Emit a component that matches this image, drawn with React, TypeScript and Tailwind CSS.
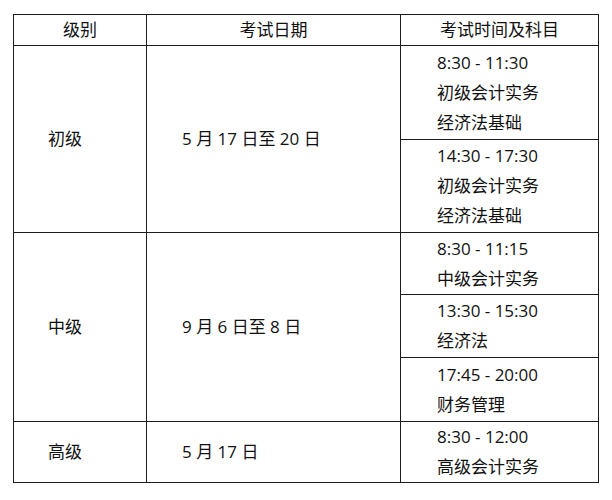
const font = { fontFamily: '"Open Sans", "Noto Sans CJK SC", "Noto Sans", sans-serif' };

type Slot = { time: string; subjects: string[]; h: string };
type Level = { name: string; date: string; slots: Slot[] };

const levels: Level[] = [
  {
    name: "初级",
    date: "5 月 17 日至 20 日",
    slots: [
      { time: "8:30 - 11:30", subjects: ["初级会计实务", "经济法基础"], h: "h-[94px]" },
      { time: "14:30 - 17:30", subjects: ["初级会计实务", "经济法基础"], h: "h-[93px]" },
    ],
  },
  {
    name: "中级",
    date: "9 月 6 日至 8 日",
    slots: [
      { time: "8:30 - 11:15", subjects: ["中级会计实务"], h: "h-[62px]" },
      { time: "13:30 - 15:30", subjects: ["经济法"], h: "h-[63px]" },
      { time: "17:45 - 20:00", subjects: ["财务管理"], h: "h-[64px]" },
    ],
  },
  {
    name: "高级",
    date: "5 月 17 日",
    slots: [{ time: "8:30 - 12:00", subjects: ["高级会计实务"], h: "h-[61px]" }],
  },
];

const cell = "border border-[#1c1c1c] align-middle";

export default function App() {
  return (
    <div className="w-[612px] h-[500px] bg-white pt-[14px] pl-[13px] text-[17px] text-[#111]" style={font}>
      <table className="border-collapse table-fixed w-[585px]">
        <colgroup>
          <col className="w-[133px]" />
          <col className="w-[254px]" />
          <col className="w-[198px]" />
        </colgroup>
        <thead>
          <tr className="h-[31px]">
            <th className={`${cell} font-normal text-center`}>级别</th>
            <th className={`${cell} font-normal text-center`}>考试日期</th>
            <th className={`${cell} font-normal text-center`}>考试时间及科目</th>
          </tr>
        </thead>
        <tbody>
          {levels.map((lv) =>
            lv.slots.map((s, i) => (
              <tr key={lv.name + s.time} className={s.h}>
                {i === 0 && (
                  <>
                    <td rowSpan={lv.slots.length} className={`${cell} pl-[34px]`}>
                      {lv.name}
                    </td>
                    <td rowSpan={lv.slots.length} className={`${cell} pl-[35px]`}>
                      {lv.date}
                    </td>
                  </>
                )}
                <td className={`${cell} pl-[36px] leading-[30px]`}>
                  <div>{s.time}</div>
                  {s.subjects.map((sub) => (
                    <div key={sub}>{sub}</div>
                  ))}
                </td>
              </tr>
            ))
          )}
        </tbody>
      </table>
    </div>
  );
}
